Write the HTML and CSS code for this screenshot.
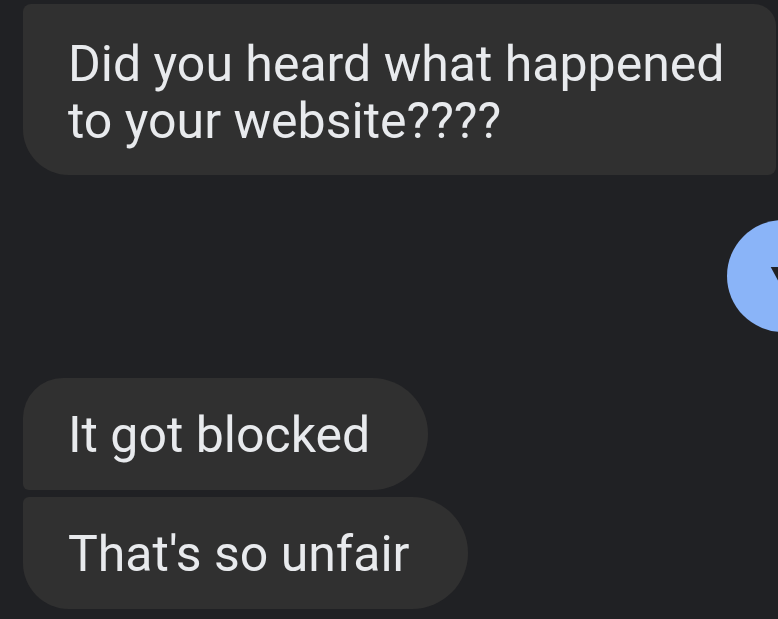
FILE: index.html
```html
<!DOCTYPE html>
<html>
<head>
<meta charset="utf-8">
<link rel="stylesheet" href="styles.css">
</head>
<body>
<div class="chat">
  <div class="bubble b1">Did you heard what happened<br>to your website????</div>
  <div class="avatar">Y</div>
  <div class="bubble b2">It got blocked</div>
  <div class="bubble b3">That's so unfair</div>
</div>
</body>
</html>
```
FILE: styles.css
```css
html, body {
  margin: 0;
  padding: 0;
  background: #202124;
  width: 778px;
  height: 619px;
  overflow: hidden;
}
.chat {
  display: flex;
  flex-direction: column;
  align-items: flex-start;
  padding: 4px 0 0 23px;
}
.bubble {
  background: #303030;
  color: #e8eaed;
  font-family: Roboto, "Liberation Sans", sans-serif;
  font-size: 50px;
  line-height: 57px;
  padding: 29px 58px 26px 45px;
  white-space: nowrap;
}
.b1 {
  width: 753px;
  box-sizing: border-box;
  padding: 32px 0 25px 45px;
  border-radius: 8px 22px 8px 46px;
}
.avatar {
  align-self: flex-end;
  margin-top: 45px;
  margin-right: -61px;
  width: 112px;
  height: 112px;
  border-radius: 50%;
  background: #8ab4f8;
  color: #202124;
  font-family: Roboto, "Liberation Sans", sans-serif;
  font-size: 54px;
  font-weight: 500;
  display: flex;
  align-items: center;
  justify-content: center;
  padding: 20px 0 0 8px;
  box-sizing: border-box;
}
.b2 {
  margin-top: 46px;
  border-radius: 40px 56px 56px 6px;
}
.b3 {
  margin-top: 7px;
  border-radius: 6px 56px 56px 46px;
}
```
